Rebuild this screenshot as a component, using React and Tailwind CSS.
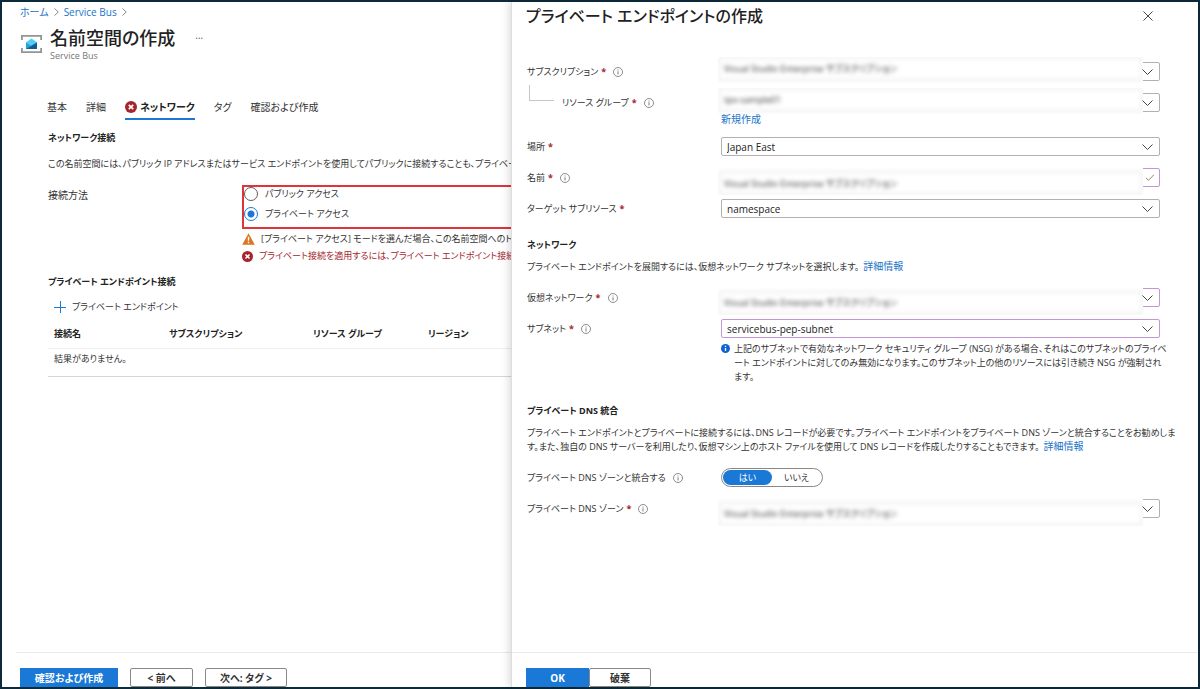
import { useState } from "react";

const tabs = [
    { label: "基本" },
    { label: "詳細" },
    { label: "ネットワーク", active: true, error: true },
    { label: "タグ" },
    { label: "確認および作成" },
];

const columns = [
    { label: "接続名", width: "w-[115px]" },
    { label: "サブスクリプション", width: "w-[144px]" },
    { label: "リソース グループ", width: "w-[115px]" },
    { label: "リージョン", width: "w-[135px]" },
];

function ErrorIcon({ className }) {
    return (
        <svg className={className} viewBox="0 0 12 12">
            <circle cx="6" cy="6" r="6" fill="#a4262c" />
            <path d="M3.8 3.8l4.4 4.4M8.2 3.8L3.8 8.2" stroke="#fff" strokeWidth="1.7" />
        </svg>
    );
}

function WarningIcon() {
    return (
        <svg className="h-3 w-[13px] shrink-0" viewBox="0 0 13 12">
            <path d="M6.5 0.3L12.8 11.7H0.2z" fill="#db7521" />
            <path d="M6.5 3.8v4M6.5 8.8v1.5" stroke="#fff" strokeWidth="1.4" />
        </svg>
    );
}

function InfoIcon() {
    return (
        <svg className="h-2.5 w-2.5 shrink-0" viewBox="0 0 10 10" fill="none" stroke="#605e5c">
            <circle cx="5" cy="5" r="4.5" strokeWidth="0.7" />
            <path d="M5 4.3v3.2M5 2.5v1" strokeWidth="0.8" />
        </svg>
    );
}

function InfoFilledIcon() {
    return (
        <svg className="h-[9px] w-[9px] shrink-0" viewBox="0 0 9 9">
            <circle cx="4.5" cy="4.5" r="4.5" fill="#0f62d6" />
            <path d="M4.5 3.9v3.2M4.5 1.8v1.2" stroke="#fff" strokeWidth="1.3" />
        </svg>
    );
}

function Chevron() {
    return (
        <svg
            className="pointer-events-none absolute right-1.5 top-1.5 h-1.5 w-[11px]"
            viewBox="0 0 11 6"
            fill="none"
            stroke="#484644"
        >
            <path d="M0.5 0.5l5 5 5-5" />
        </svg>
    );
}

function Check() {
    return (
        <svg className="absolute right-1 top-[5px] h-[7px] w-2.5" viewBox="0 0 10 8" fill="none" stroke="#8a7355">
            <path d="M0.5 4.5L3.3 7.2 9.5 0.8" />
        </svg>
    );
}

function BreadcrumbArrow() {
    return (
        <svg className="h-2 w-[5px]" viewBox="0 0 5 8" fill="none" stroke="#8a8886">
            <path d="M0.5 0.5L4.3 4 0.5 7.5" />
        </svg>
    );
}

function ServiceBusIcon() {
    return (
        <svg className="mt-[9px] h-[18px] w-[21px] shrink-0" viewBox="0 0 21 18">
            <path d="M0 5V0h21v5h-1.8V1.8H1.8V5zM0 13v5h21v-5h-1.8v3.2H1.8V13z" fill="#949494" />
            <path d="M5 7.2L10.5 3.6 16 7.2v6.8H5z" fill="#4fd0f0" />
            <path d="M5 7.6l5.5 3.4L16 7.6V14H5z" fill="#2f9fd8" />
            <path d="M16 7.6V14H5z" fill="#0f5f95" />
        </svg>
    );
}

// ラベル（必須マークと情報アイコン付き）
function FieldLabel({ id, label, required, info, nested }) {
    const Tag = id ? "label" : "span";
    return (
        <div className="flex h-[19px] w-[194px] shrink-0 items-center">
            {nested && <span className="mb-5 ml-0.5 mr-2 h-4 w-[25px] border-b border-l border-[#c8c6c4]" />}
            <Tag htmlFor={id}>
                {label}
                {required && <span className="ml-[3px] font-bold text-[#a4262c]">*</span>}
            </Tag>
            {info && (
                <span className="ml-[7px]">
                    <InfoIcon />
                </span>
            )}
        </div>
    );
}

function Control({ id, value, text, className }) {
    if (text) {
        return <input id={id} type="text" defaultValue={value} className={className} />;
    }
    return (
        <select id={id} defaultValue={value} className={className}>
            <option>{value}</option>
        </select>
    );
}

// masked: 値をぼかして表示する
function Field({ id, label, value, required, info, nested, text, valid, masked, low, children }) {
    return (
        <div className="flex">
            <FieldLabel id={id} label={label} required={required} info={info} nested={nested} />
            <div className="min-w-0 flex-1">
                <div
                    className={`relative h-[19px] rounded-xs border ${valid ? "border-[#c596d6]" : "border-[#b3b0ad]"}`}
                >
                    {masked ? (
                        <div
                            className={`absolute -left-1 right-4 flex overflow-hidden bg-white ${
                                low ? "-top-0.5 h-7 items-end" : "-top-1.5 h-[26px] items-start"
                            }`}
                        >
                            <Control
                                id={id}
                                value={value}
                                text={text}
                                className="h-6 w-full appearance-none border-2 border-[#ececec] bg-white px-1 text-[#333] blur-[2px]"
                            />
                        </div>
                    ) : (
                        <Control
                            id={id}
                            value={value}
                            text={text}
                            className="block h-full w-full appearance-none bg-transparent px-[5px] text-[10px] leading-4 text-[#222]"
                        />
                    )}
                    {text ? <Check /> : <Chevron />}
                </div>
                {children}
            </div>
        </div>
    );
}

function NamespacePage() {
    const [access, setAccess] = useState("private");
    const radio =
        "h-3.5 w-3.5 shrink-0 appearance-none rounded-full border border-[#605e5c] bg-white checked:border-[#1a78d6] checked:bg-[radial-gradient(circle,#1a78d6_3px,#fff_4px)]";

    return (
        <main className="flex min-w-0 flex-col overflow-hidden whitespace-nowrap">
            <nav className="flex h-5 items-center gap-[5px] pl-[18px] text-[10px] text-[#1a73c8]">
                <a href="#home">ホーム</a>
                <BreadcrumbArrow />
                <a href="#service-bus">Service Bus</a>
                <BreadcrumbArrow />
            </nav>

            <header className="flex gap-2 pl-[19px] pt-1">
                <ServiceBusIcon />
                <div>
                    <div className="flex items-center gap-5">
                        <h1 className="text-[18px] font-medium leading-6 text-[#222]">名前空間の作成</h1>
                        <button type="button" aria-label="その他" className="pb-1.5 text-[10px] text-[#605e5c]">
                            …
                        </button>
                    </div>
                    <p className="leading-3 text-[#777]">Service Bus</p>
                </div>
            </header>

            <div role="tablist" className="mt-9 flex gap-[19px] pl-[45px] text-[10px]">
                {tabs.map((tab) => (
                    <button
                        key={tab.label}
                        type="button"
                        role="tab"
                        aria-selected={!!tab.active}
                        className={`flex h-[22px] items-center gap-[3px] border-b-2 pb-0.5 ${
                            tab.active ? "border-[#1a78d6] font-bold text-[#222]" : "border-transparent"
                        }`}
                    >
                        {tab.error && <ErrorIcon className="h-3 w-3" />}
                        {tab.label}
                    </button>
                ))}
            </div>

            <section className="mt-[11px] pl-[46px]">
                <h2 className="font-bold text-[#222]">ネットワーク接続</h2>
                <p className="mt-3">
                    この名前空間には、パブリック IP アドレスまたはサービス エンドポイントを使用してパブリックに接続することも、プライベート
                </p>
                <div className="mt-3.5 flex">
                    <span className="mt-[3px] w-[194px] shrink-0 text-[10px]">接続方法</span>
                    <div className="flex-1">
                        <div className="flex h-11 flex-col gap-1.5 border-2 border-r-0 border-[#e0343a]">
                            <label className="flex h-3.5 items-center gap-[7px]">
                                <input
                                    type="radio"
                                    name="access"
                                    checked={access === "public"}
                                    onChange={() => setAccess("public")}
                                    className={radio}
                                />
                                パブリック アクセス
                            </label>
                            <label className="flex h-3.5 items-center gap-[7px]">
                                <input
                                    type="radio"
                                    name="access"
                                    checked={access === "private"}
                                    onChange={() => setAccess("private")}
                                    className={radio}
                                />
                                プライベート アクセス
                            </label>
                        </div>
                        <p className="mt-[3px] flex items-center gap-1.5">
                            <WarningIcon />
                            [プライベート アクセス] モードを選んだ場合、この名前空間へのトラフィッ
                        </p>
                        <p className="mt-[3px] flex items-center gap-1.5 text-[#a4262c]">
                            <ErrorIcon className="h-[11px] w-[11px] shrink-0" />
                            プライベート接続を適用するには、プライベート エンドポイント接続を
                        </p>
                    </div>
                </div>
            </section>

            <section className="mt-3 pl-[46px]">
                <h2 className="font-bold text-[#222]">プライベート エンドポイント接続</h2>
                <button type="button" className="ml-1.5 mt-[11px] flex items-center gap-1.5">
                    <svg className="h-3 w-3" viewBox="0 0 12 12" stroke="#1a78d6">
                        <path d="M0 6.5h12M6.5 0v12" />
                    </svg>
                    プライベート エンドポイント
                </button>
                <table className="mt-1.5 w-[509px] table-fixed text-left">
                    <thead>
                        <tr className="h-7 border-b border-[#eee] text-[#222]">
                            {columns.map((col) => (
                                <th key={col.label} className={`pl-1.5 font-bold ${col.width}`}>
                                    {col.label}
                                </th>
                            ))}
                        </tr>
                    </thead>
                    <tbody>
                        <tr className="h-7 border-b border-[#d6d6d6]">
                            <td colSpan={4} className="pb-1.5 pl-1.5">
                                結果がありません。
                            </td>
                        </tr>
                    </tbody>
                </table>
            </section>

            <footer className="ml-3.5 mt-auto flex gap-3 border-t border-[#eaeaea] pl-1 pt-[15px] text-[10px] font-bold text-[#333]">
                <button type="button" className="h-[19px] w-[98px] bg-[#1a78d6] text-white">
                    確認および作成
                </button>
                <button type="button" className="h-[19px] w-[63px] rounded-xs border border-[#8a8886]">
                    &lt; 前へ
                </button>
                <button type="button" className="h-[19px] w-[82px] rounded-xs border border-[#8a8886]">
                    次へ: タグ &gt;
                </button>
            </footer>
        </main>
    );
}

function EndpointPanel() {
    const [integrate, setIntegrate] = useState(true);
    const choices = [
        { label: "はい", value: true },
        { label: "いいえ", value: false },
    ];

    return (
        <aside className="relative flex min-w-0 flex-col border-l border-[#ddd] bg-white shadow-[-2px_0_8px_rgba(0,0,0,0.15)]">
            <header className="flex items-center justify-between pl-3.5 pr-[45px] pt-0.5">
                <h1 className="text-[16px] font-medium leading-6 text-[#222]">プライベート エンドポイントの作成</h1>
                <button type="button" aria-label="閉じる">
                    <svg className="h-2.5 w-2.5" viewBox="0 0 10 10" stroke="#484644">
                        <path d="M0.5 0.5l9 9M9.5 0.5l-9 9" />
                    </svg>
                </button>
            </header>

            <form className="flex flex-col gap-3 pl-[15px] pr-[38px] pt-[34px]">
                <Field
                    id="subscription"
                    label="サブスクリプション"
                    value="Visual Studio Enterprise サブスクリプション"
                    required
                    info
                    masked
                />
                <Field id="group" label="リソース グループ" value="tpx-sample01" required info nested masked>
                    <a href="#new" className="block h-[13px] text-[10px] text-[#1a73c8]">
                        新規作成
                    </a>
                </Field>
                <Field id="location" label="場所" value="Japan East" required />
                <Field
                    id="name"
                    label="名前"
                    value="Visual Studio Enterprise サブスクリプション"
                    required
                    info
                    text
                    valid
                    masked
                    low
                />
                <Field id="target" label="ターゲット サブリソース" value="namespace" required />

                <div className="mt-2 pb-0.5">
                    <h2 className="font-bold text-[#222]">ネットワーク</h2>
                    <p className="mt-2">
                        プライベート エンドポイントを展開するには、仮想ネットワーク サブネットを選択します。
                        <a href="#network" className="ml-1 text-[10px] leading-none text-[#1a73c8]">
                            詳細情報
                        </a>
                    </p>
                </div>
                <Field
                    id="vnet"
                    label="仮想ネットワーク"
                    value="Visual Studio Enterprise サブスクリプション"
                    required
                    info
                    valid
                    masked
                    low
                />
                <Field id="subnet" label="サブネット" value="servicebus-pep-subnet" required info valid>
                    <div className="-mr-2 mt-1 flex gap-1">
                        <span className="mt-0.5">
                            <InfoFilledIcon />
                        </span>
                        <p className="[line-break:loose]">
                            上記のサブネットで有効なネットワーク セキュリティ グループ (NSG) がある場合、それはこのサブネットのプライベート エンドポイントに対してのみ無効になります。このサブネット上の他のリソースには引き続き NSG が強制されます。
                        </p>
                    </div>
                </Field>

                <div className="-mr-5 mt-2 pb-0.5">
                    <h2 className="font-bold text-[#222]">プライベート DNS 統合</h2>
                    <p className="mt-2">
                        プライベート エンドポイントとプライベートに接続するには、DNS レコードが必要です。プライベート エンドポイントをプライベート DNS ゾーンと統合することをお勧めします。また、独自の DNS サーバーを利用したり、仮想マシン上のホスト ファイルを使用して DNS レコードを作成したりすることもできます。
                        <a href="#dns" className="ml-1 text-[10px] leading-none text-[#1a73c8]">
                            詳細情報
                        </a>
                    </p>
                </div>
                <div role="radiogroup" aria-label="プライベート DNS ゾーンと統合する" className="flex">
                    <FieldLabel label="プライベート DNS ゾーンと統合する" info />
                    <div className="flex h-[19px] w-[102px] rounded-full border border-[#8a8886] p-px">
                        {choices.map((choice) => (
                            <label
                                key={choice.label}
                                className={`relative flex flex-1 items-center justify-center rounded-full ${
                                    integrate === choice.value ? "bg-[#1a78d6] text-white" : ""
                                }`}
                            >
                                <input
                                    type="radio"
                                    name="integrate"
                                    className="sr-only"
                                    checked={integrate === choice.value}
                                    onChange={() => setIntegrate(choice.value)}
                                />
                                {choice.label}
                            </label>
                        ))}
                    </div>
                </div>
                <Field
                    id="zone"
                    label="プライベート DNS ゾーン"
                    value="Visual Studio Enterprise サブスクリプション"
                    required
                    info
                    masked
                    low
                />
            </form>

            <footer className="mt-auto flex border-t border-[#eaeaea] pl-3.5 pt-[15px] text-[10px] font-bold text-[#333]">
                <button type="button" className="h-[19px] w-[63px] bg-[#1a78d6] text-white">
                    OK
                </button>
                <button type="button" className="h-[19px] w-[62px] rounded-xs border border-[#8a8886]">
                    破棄
                </button>
            </footer>
        </aside>
    );
}

export default function App() {
    return (
        <div
            lang="ja"
            className="grid min-h-screen grid-cols-[509fr_687fr] border-2 border-[#0b2a3a] bg-white font-['Open_Sans','Noto_Sans_CJK_JP',sans-serif] text-[9px] leading-[14px] text-[#333] [font-feature-settings:'palt']"
        >
            <NamespacePage />
            <EndpointPanel />
        </div>
    );
}
